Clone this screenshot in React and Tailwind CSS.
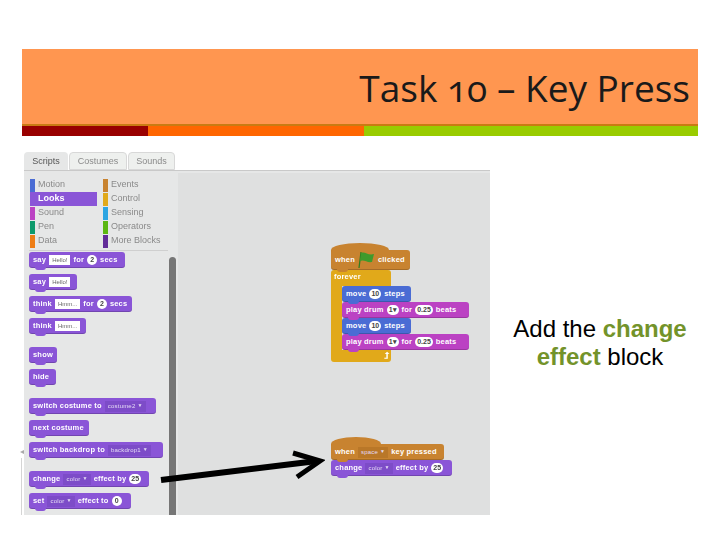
const PURPLE = 'bg-[#8a55d7]';
const BROWN = 'bg-[#c88330]';
const BLUE = 'bg-[#4a6cd4]';
const MAGENTA = 'bg-[#bb42c3]';

function Block({ color = PURPLE, width, className = 'h-[16px]', children }) {
    return (
        <div className={`relative shrink-0 flex items-center px-[4px] rounded-[3px] shadow-[inset_0_-1px_0_rgba(0,0,0,0.18)] font-bold text-[7.5px] tracking-[0.2px] text-white whitespace-nowrap ${color} ${width} ${className}`}>
            <span className={`absolute left-[6px] -bottom-[2px] w-[11px] h-[3px] rounded-b-[3px] ${color}`} />
            <span className="relative flex items-center gap-[3px]">{children}</span>
        </div>
    );
}

function Hat({ color = BROWN, width, capWidth, height, children }) {
    return (
        <div className={`relative ${width}`}>
            <div className={`h-[14px] rounded-t-[50%] absolute -top-[7px] left-0 ${capWidth} ${color}`} />
            <Block color={color} width={width} className={`z-10 ${height}`}>{children}</Block>
        </div>
    );
}

const Text = ({ children }) => <span className="bg-white text-[#666] font-normal text-[6px] tracking-normal px-[3px] h-[10px] leading-[10px]">{children}</span>;
const Num = ({ children }) => <span className="bg-white text-[#444] text-[7px] tracking-normal rounded-full px-[2px] min-w-[10px] h-[10px] leading-[10px] text-center">{children}</span>;
const Drop = ({ tone = 'bg-[#7d4cc8]', children }) => (
    <span className={`flex items-center gap-[2px] ${tone} text-[#e4daf5] font-normal text-[6px] tracking-[0.2px] px-[3px] h-[11px]`}>
        {children}
        <span className="text-[5px]">▼</span>
    </span>
);

const categories = [
    ['Motion', 'bg-[#4a6cd4]'],
    ['Events', 'bg-[#c88330]'],
    ['Looks', 'bg-[#8a55d7]'],
    ['Control', 'bg-[#e1a91a]'],
    ['Sound', 'bg-[#bb42c3]'],
    ['Sensing', 'bg-[#2ca5e2]'],
    ['Pen', 'bg-[#0e9a6c]'],
    ['Operators', 'bg-[#5cb712]'],
    ['Data', 'bg-[#ee7d16]'],
    ['More Blocks', 'bg-[#632d99]'],
];

function Category({ name, bar }) {
    const active = name === 'Looks';
    return (
        <div className={`flex items-center gap-[3px] h-[14px] text-[9px] ${active ? 'bg-[#8a55d7] text-white font-bold' : 'text-[#8a8a8a]'}`}>
            <span className={`w-[5px] h-[13px] ${bar}`} />
            <span>{name}</span>
        </div>
    );
}

function Flag() {
    return (
        <svg width="17" height="18" viewBox="0 0 17 18" className="-my-[3px]">
            <path d="M3 1 L1 17" stroke="#2f7d20" strokeWidth="1.2" />
            <path d="M3 2 C7 0 10 5 16 3 L14 11 C9 12 6 8 2 10 Z" fill="#3f9a2c" />
        </svg>
    );
}

function Palette() {
    return (
        <div className="w-[144px] h-full bg-[#e6e7e7] px-[5px] pt-[7px] overflow-hidden">
            <div className="grid grid-cols-[67px_68px] gap-x-[6px] pl-[1px] pb-[2px] border-b border-[#cfcfcf] -mr-[5px]">
                {categories.map(([name, bar]) => <Category key={name} name={name} bar={bar} />)}
            </div>
            <div className="flex flex-col gap-[6px] mt-[1px]">
                <Block width="w-[96px]">say <Text>Hello!</Text> for <Num>2</Num> secs</Block>
                <Block width="w-[48px]">say <Text>Hello!</Text></Block>
                <Block width="w-[103px]">think <Text>Hmm...</Text> for <Num>2</Num> secs</Block>
                <Block width="w-[57px]">think <Text>Hmm...</Text></Block>
                <Block width="w-[28px]" className="h-[16px] mt-[7px]">show</Block>
                <Block width="w-[27px]">hide</Block>
                <Block width="w-[127px]" className="h-[16px] mt-[7px]">switch costume to <Drop>costume2</Drop></Block>
                <Block width="w-[60px]">next costume</Block>
                <Block width="w-[134px]">switch backdrop to <Drop>backdrop1</Drop></Block>
                <Block width="w-[120px]" className="h-[16px] mt-[7px]">change <Drop>color</Drop> effect by <Num>25</Num></Block>
                <Block width="w-[102px]">set <Drop>color</Drop> effect to <Num>0</Num></Block>
            </div>
        </div>
    );
}

function Forever() {
    return (
        <div className="w-[60px] relative">
            <div className="h-[16px] bg-[#e1a91a] rounded-t-[3px] font-bold text-[7.5px] tracking-[0.2px] text-white px-[3px] leading-[14px]">forever</div>
            <div className="flex">
                <div className="w-[11px] shrink-0 h-[64px] bg-[#e1a91a]" />
                <div className="flex flex-col relative z-10">
                    <Block color={BLUE} width="w-[69px]" className="h-[16px] z-40">move <Num>10</Num> steps</Block>
                    <Block color={MAGENTA} width="w-[127px]" className="h-[16px] z-30">play drum <Num>1▾</Num> for <Num>0.25</Num> beats</Block>
                    <Block color={BLUE} width="w-[69px]" className="h-[16px] z-20">move <Num>10</Num> steps</Block>
                    <Block color={MAGENTA} width="w-[127px]" className="h-[16px] z-10">play drum <Num>1▾</Num> for <Num>0.25</Num> beats</Block>
                </div>
            </div>
            <div className="h-[12px] bg-[#e1a91a] rounded-b-[3px] flex justify-end items-center pr-[2px] text-[9px] font-bold text-white leading-none">⮥</div>
        </div>
    );
}

function Scratch() {
    return (
        <div className="w-[466px] h-[363px] ml-[2px] flex flex-col relative overflow-hidden font-['Liberation_Sans',sans-serif] blur-[0.4px]">
            <div className="h-[20px] flex gap-[1px] text-[9px] text-[#8a8a8a] shrink-0">
                <div className="w-[44px] h-[20px] bg-[#e6e7e7] rounded-t-[4px] text-center leading-[18px] text-[#555]">Scripts</div>
                <div className="w-[58px] h-[18px] bg-[#eef0ee] border border-[#d8d8d8] rounded-t-[4px] text-center leading-[17px]">Costumes</div>
                <div className="w-[47px] h-[18px] bg-[#eef0ee] border border-[#d8d8d8] rounded-t-[4px] text-center leading-[17px]">Sounds</div>
            </div>
            <div className="flex flex-1 min-h-0 border-t border-[#c9c9c9] -mt-[2px]">
                <Palette />
                <div className="w-[10px] h-full bg-[#e6e7e7] pt-[86px] pl-[1px]">
                    <div className="w-[7px] h-full bg-[#767676] rounded-t-[4px]" />
                </div>
                <div className="flex-1 h-full bg-[#e6e7e7] pt-[2px]">
                    <div className="h-full bg-[#dfe0e0]" />
                </div>
            </div>

            <div className="absolute left-[307px] top-[98px] z-10">
                <Hat width="w-[79px]" capWidth="w-[58px]" height="h-[20px]">when <Flag /> clicked</Hat>
                <Forever />
            </div>
            <div className="absolute left-[307px] top-[292px] z-10">
                <Hat width="w-[113px]" capWidth="w-[50px]" height="h-[16px]">when <Drop tone="bg-[#b97728]">space</Drop> key pressed</Hat>
                <Block width="w-[121px]">change <Drop>color</Drop> effect by <Num>25</Num></Block>
            </div>
        </div>
    );
}

export default function App() {
    return (
        <div className="relative w-[720px] h-[540px] bg-white overflow-hidden pt-[49px] px-[22px]">
            <div className="h-[75px] bg-[#ff9650] flex justify-end pr-[8px] font-['Open_Sans',sans-serif] text-[37px] leading-[78px] text-[#1a1a1a]">
                <span className="[font-feature-settings:'onum']">Task 10 – Key Press</span>
            </div>
            <div className="flex h-[12px] border-t-2 border-[#c97b12]">
                <div className="w-[126px] bg-[#990000]" />
                <div className="w-[216px] bg-[#ff6600]" />
                <div className="flex-1 bg-[#99cc00]" />
            </div>
            <div className="flex mt-[16px]">
                <Scratch />
                <div className="flex-1 pl-[12px] pt-[163px] text-center font-['Liberation_Sans',sans-serif] text-[24px] leading-[28px] text-black">
                    Add the <b className="text-[#73932a]">change</b><br />
                    <b className="text-[#73932a]">effect</b> block
                </div>
            </div>
            <svg width="170" height="40" viewBox="0 0 170 40" className="absolute left-[155px] top-[447px]" fill="none" stroke="#000" strokeWidth="6">
                <path d="M6 33 L162 14" />
                <path d="M138 6 L165 14 L142 30" strokeWidth="5" />
            </svg>
            <span className="absolute left-[20px] top-[446px] text-[8px] leading-[10px] text-[#aaa]">◂</span>
            <div className="absolute left-[21px] top-[458px] w-[1px] h-[57px] bg-[#d5d5d5]" />
        </div>
    );
}
